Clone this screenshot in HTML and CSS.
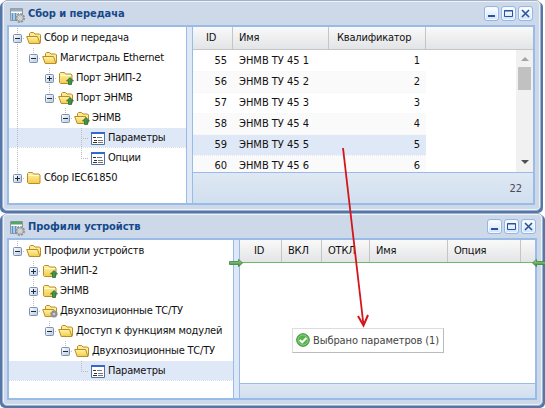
FILE: index.html
```html
<!DOCTYPE html>
<html lang="ru">
<head>
<meta charset="utf-8">
<title>Сбор и передача</title>
<link rel="stylesheet" href="styles.css">
</head>
<body>
<svg class="defs" width="0" height="0">
  <defs>
    <linearGradient id="gold" x1="0" y1="0" x2="0" y2="1"><stop offset="0" stop-color="#fff5a5"/><stop offset="1" stop-color="#f3cb4d"/></linearGradient>
    <linearGradient id="leaf" x1="0" y1="0" x2="0" y2="1"><stop offset="0" stop-color="#a4d991"/><stop offset="1" stop-color="#37853a"/></linearGradient>
    <linearGradient id="box" x1="0" y1="0" x2="1" y2="1"><stop offset="0" stop-color="#fff"/><stop offset="1" stop-color="#b9c7dc"/></linearGradient>
    <symbol id="closed" viewBox="0 0 16 16"><path d="M1.500 3.500l1-1h4l1 1.500h5.500l1 1v8l-1 .5h-10.500l-1-1z" fill="url(#gold)" stroke="#b88d2c"/><path d="M2.500 5.500h10.500" stroke="#fffbd4"/></symbol>
    <symbol id="open" viewBox="0 0 16 16"><path d="M3.500 12.500v-9l1-1h3l1.500 1.500h4.500l1 1v7.500l-1 1h-9z" fill="#ffe98c" stroke="#b88d2c"/><path d="M.7 6.500h10.800l2.500 7h-10.800z" fill="url(#gold)" stroke="#b88d2c"/></symbol>
    <symbol id="up" viewBox="0 0 8 8"><path d="M4 .5l3.500 3.500h-2v3.500h-3v-3.500h-2z" fill="#43924a" stroke="#2b7037" stroke-width=".8"/></symbol>
    <symbol id="gear" viewBox="0 0 8 8"><circle cx="4" cy="4" r="3.200" fill="#aaa" stroke="#7d8186" stroke-dasharray="1.500 1"/><circle cx="4" cy="4" r="2.600" fill="#9c9c9c" stroke="#858a90" stroke-width=".7"/><circle cx="4" cy="4" r="1" fill="#ddd"/></symbol>
    <symbol id="minus" viewBox="0 0 9 9"><rect x=".5" y=".5" width="8" height="8" rx="1" fill="url(#box)" stroke="#7890b2"/><path d="M2 4.500h5" stroke="#1c2b45"/></symbol>
    <symbol id="plus" viewBox="0 0 9 9"><rect x=".5" y=".5" width="8" height="8" rx="1" fill="url(#box)" stroke="#7890b2"/><path d="M2 4.500h5M4.500 2v5" stroke="#1c2b45"/></symbol>
    <symbol id="form" viewBox="0 0 14 13"><path d="M.5.5h13v12h-13z" fill="#fff" stroke="#5272a5"/><path d="M0 1h14" stroke="#3767ce" stroke-width="2"/><path d="M2 5.500h3M3 8.500h3M2 10.500h4" stroke="#333"/><path d="M6 5.500h5M7 8.500h5M7 10.500h5" stroke="#777"/></symbol>
    <symbol id="app" viewBox="0 0 16 16"><path d="M1.500 1.500h12v12h-12z" fill="#fff" stroke="#8798a8"/><path d="M2 3h11" stroke-width="3"/><path d="M3.500 6v7M6.500 6v7" stroke="#5b92cb" stroke-width="2"/><circle cx="11" cy="11" r="4" fill="#d6d9dc" stroke="#8b9095" stroke-dasharray="2 1.100" stroke-width="2"/><circle cx="11" cy="11" r="3.200" fill="#dadddf" stroke="#989da2"/><circle cx="11" cy="11" r="1.300" fill="#fff" stroke="#999" stroke-width=".6"/></symbol>
    <symbol id="wmin" viewBox="0 0 11 11"><path d="M2 8h7" stroke="#2d529c" stroke-width="2"/></symbol>
    <symbol id="wmax" viewBox="0 0 11 11"><path d="M1.500 2.500h8v6h-8zM1 3h9" fill="none" stroke="#2d529c"/></symbol>
    <symbol id="wclose" viewBox="0 0 11 11"><path d="M2 2l7 7M9 2l-7 7" stroke="#2d529c" stroke-width="1.600"/></symbol>
    <symbol id="drop" viewBox="0 0 14 8"><path d="M.5 2.500h9v-2.200l4 3.700-4 3.700v-2.200h-9z" fill="url(#leaf)" stroke="#3a863f" stroke-width=".8"/></symbol>
  </defs>
</svg>

<section class="window first">
  <header class="titlebar">
    <svg class="app"><use href="#app"/></svg><h1>Сбор и передача</h1>
    <button><svg><use href="#wmin"/></svg></button><button><svg><use href="#wmax"/></svg></button><button><svg><use href="#wclose"/></svg></button>
  </header>
  <div class="panes">
    <ul class="tree">
      <li><i class="line node"></i><svg class="tog"><use href="#minus"/></svg><svg class="ico"><use href="#open"/></svg><span>Сбор и передача</span></li>
      <li><i class="line"></i><i class="node"></i><svg class="tog"><use href="#minus"/></svg><svg class="ico"><use href="#open"/></svg><span>Магистраль Ethernet</span></li>
      <li><i class="line"></i><i></i><i class="line node"></i><svg class="tog"><use href="#plus"/></svg><svg class="ico"><use href="#closed"/><use href="#up" x="8" y="7" width="8" height="8"/></svg><span>Порт ЭНИП-2</span></li>
      <li><i class="line"></i><i></i><i class="node"></i><svg class="tog"><use href="#minus"/></svg><svg class="ico"><use href="#open"/><use href="#up" x="8" y="7" width="8" height="8"/></svg><span>Порт ЭНМВ</span></li>
      <li><i class="line"></i><i></i><i></i><i class="node"></i><svg class="tog"><use href="#minus"/></svg><svg class="ico"><use href="#open"/><use href="#up" x="8" y="7" width="8" height="8"/></svg><span>ЭНМВ</span></li>
      <li class="selected"><i class="line"></i><i></i><i></i><i></i><i class="tee"></i><svg class="form"><use href="#form"/></svg><span>Параметры</span></li>
      <li><i class="line"></i><i></i><i></i><i></i><i class="elbow"></i><svg class="form"><use href="#form"/></svg><span>Опции</span></li>
      <li><i class="node"></i><svg class="tog"><use href="#plus"/></svg><svg class="ico"><use href="#closed"/></svg><span>Сбор IEC61850</span></li>
    </ul>
    <div class="splitter"></div>
    <div class="grid">
      <div class="head"><span class="mid">ID</span><span>Имя</span><span>Квалификатор</span><span class="rest"></span></div>
      <div class="body">
        <div class="rows">
          <div class="row"><span>55</span><span>ЭНМВ ТУ 45 1</span><span>1</span></div>
          <div class="row"><span>56</span><span>ЭНМВ ТУ 45 2</span><span>2</span></div>
          <div class="row"><span>57</span><span>ЭНМВ ТУ 45 3</span><span>3</span></div>
          <div class="row"><span>58</span><span>ЭНМВ ТУ 45 4</span><span>4</span></div>
          <div class="row selected"><span>59</span><span>ЭНМВ ТУ 45 5</span><span>5</span></div>
          <div class="row"><span>60</span><span>ЭНМВ ТУ 45 6</span><span>6</span></div>
        </div>
        <div class="scroll"><b class="arrow-up"></b><b class="thumb"></b><b class="arrow-down"></b></div>
      </div>
      <footer>22</footer>
    </div>
  </div>
</section>

<section class="window second">
  <header class="titlebar">
    <svg class="app green"><use href="#app"/></svg><h1>Профили устройств</h1>
    <button><svg><use href="#wmin"/></svg></button><button><svg><use href="#wmax"/></svg></button><button><svg><use href="#wclose"/></svg></button>
  </header>
  <div class="panes">
    <ul class="tree">
      <li><i class="node"></i><svg class="tog"><use href="#minus"/></svg><svg class="ico"><use href="#open"/></svg><span>Профили устройств</span></li>
      <li><i></i><i class="line node"></i><svg class="tog"><use href="#plus"/></svg><svg class="ico"><use href="#closed"/><use href="#up" x="8" y="7" width="8" height="8"/></svg><span>ЭНИП-2</span></li>
      <li><i></i><i class="line node"></i><svg class="tog"><use href="#plus"/></svg><svg class="ico"><use href="#closed"/><use href="#up" x="8" y="7" width="8" height="8"/></svg><span>ЭНМВ</span></li>
      <li><i></i><i class="node"></i><svg class="tog"><use href="#minus"/></svg><svg class="ico"><use href="#open"/><use href="#gear" x="8" y="7" width="8" height="8"/></svg><span>Двухпозиционные ТС/ТУ</span></li>
      <li><i></i><i></i><i class="node"></i><svg class="tog"><use href="#minus"/></svg><svg class="ico"><use href="#open"/></svg><span>Доступ к функциям модулей</span></li>
      <li><i></i><i></i><i></i><i class="node"></i><svg class="tog"><use href="#minus"/></svg><svg class="ico"><use href="#open"/></svg><span>Двухпозиционные ТС/ТУ</span></li>
      <li class="selected"><i></i><i></i><i></i><i></i><i class="elbow"></i><svg class="form"><use href="#form"/></svg><span>Параметры</span></li>
    </ul>
    <div class="splitter"></div>
    <div class="grid">
      <div class="head"><span class="mid">ID</span><span>ВКЛ</span><span>ОТКЛ</span><span>Имя</span><span>Опция</span><span class="rest"></span></div>
      <div class="body"></div>
      <footer></footer>
    </div>
  </div>
  <svg class="drop left"><use href="#drop"/></svg>
  <svg class="drop right"><use href="#drop"/></svg>
</section>

<svg class="pointer" viewBox="0 0 30 182"><path d="M4 0L24.500 177" fill="none" stroke="#d4161b" stroke-width="1.800"/><path d="M19 168l5.500 9.500 4.500-10.500" fill="none" stroke="#d4161b" stroke-width="2"/></svg>
<div class="tip">
  <svg viewBox="0 0 14 14"><circle cx="7" cy="7" r="6.300" fill="#54b34b" stroke="#38913a"/><circle cx="7" cy="7" r="5" fill="none" stroke="#8ed27f"/><path d="M3.800 7l2.400 2.300 4.200-4.300" fill="none" stroke="#fff" stroke-width="2"/></svg>
  <span>Выбрано параметров (1)</span>
</div>
</body>
</html>
```

FILE: styles.css
```css
* { box-sizing: border-box; }
body {
  margin: 0; width: 545px; height: 408px; overflow: hidden; position: relative;
  background: #fff; color: #111;
  font: 11px/20px "DejaVu Sans Condensed", "DejaVu Sans", sans-serif;
  font-stretch: condensed; letter-spacing: 0; white-space: nowrap;
}
svg { display: block; flex: none; }
.defs { position: absolute; }

.window {
  position: relative; display: flex; flex-direction: column;
  margin-left: 2px; padding: 0 5px 5px 4px;
  border: 1px solid #a2b1cb; border-radius: 5px;
  background: #cdd9e8;
}
.first { width: 539px; height: 211px; box-shadow: inset 0 0 0 1px #eef3f9, -2px 2px 0 0 #5477a9, 2px 2px 0 0 #5477a9; }
.second { width: 541px; height: 193px; margin-top: 2px; box-shadow: inset 0 0 0 1px #eef3f9, -2px 2px 0 0 #5477a9, 2px 2px 0 0 #5477a9; }

.titlebar { display: flex; height: 24px; align-items: center; padding: 0 2px 0 2px; gap: 2px; }
.second .titlebar { padding-right: 1px; }
.app { width: 16px; height: 16px; margin-top: 3px; stroke: #9aa9b7; }
.green { stroke: #55a56a; }
h1 { flex: 1; margin: 2px 0 0 1px; font-size: 11px; line-height: 20px; color: #15498b; letter-spacing: -0.05px; }
button { width: 15px; height: 15px; padding: 1px; border: 1px solid #91b6e7; border-radius: 3px; background: linear-gradient(#fff, #cfe3fa); box-shadow: inset 0 0 0 1px #f4f9ff; }
button svg { width: 11px; height: 11px; }

.panes { flex: 1; min-height: 0; display: flex; border: 2px solid #99bbe8; }
.tree { width: 177px; margin: 0; padding: 1px 0 0; list-style: none; background: #fff; overflow: hidden; letter-spacing: -0.2px; }
.second .tree { width: 224px; }
.tree li { display: flex; align-items: center; height: 20px; padding-left: 1px; }
.tree .selected { background: linear-gradient(#dfe8f6, #dfe8f6) 0 0 / 100% 19px no-repeat, linear-gradient(90deg, #d3dfef 50%, transparent 0) 0 19px / 2px 1px repeat-x; }
.tog { position: relative; width: 9px; height: 9px; margin: 0 4px 0 3px; }
.ico { width: 16px; height: 16px; margin-right: 2px; }
.form { width: 14px; height: 13px; margin: 0 3px 0 1px; }
.tree i { position: relative; flex: none; width: 16px; height: 20px; }
/* the connector column sits behind its toggle */
.tree .node { margin-right: -16px; }
.line { background: linear-gradient(#bbb 50%, transparent 0) 7px 0 / 1px 2px repeat-y; }
.tee { background: linear-gradient(#bbb 50%, transparent 0) 7px 0 / 1px 2px repeat-y; }
.elbow::before, .node::before { content: ""; position: absolute; left: 7px; top: 0; width: 1px; height: 10px; background: linear-gradient(#bbb 50%, transparent 0) 0 0 / 1px 2px; }
.tee::after, .elbow::after, .node::after { content: ""; position: absolute; left: 7px; top: 10px; width: 8px; height: 1px; background: linear-gradient(90deg, #bbb 50%, transparent 0) 0 0 / 2px 1px; }

.splitter { width: 7px; border: solid #99bbe8; border-width: 0 1px; background: #dfe8f6; }
.grid { flex: 1; min-width: 0; display: flex; flex-direction: column; background: #fff; }
.head { height: 23px; flex: none; border-bottom: 1px solid #c5c5c5; background: linear-gradient(#f9f9f9, #e3e4e6); line-height: 22px; letter-spacing: -0.2px; }
.head span { border-right: 1px solid #c5c5c5; padding-left: 6px; }
.head .mid { padding: 0 3px 0 0; text-align: center; }
.head .rest { border: 0; }
.first .head { display: grid; grid-template-columns: 40px 96px 97px 1fr; }
.first .head span:nth-child(3) { padding-left: 8px; }
.second .head { display: grid; grid-template-columns: 42px 40px 48px 78px 73px 1fr; border-bottom-color: #72b56c; }
.body { flex: 1; min-height: 0; display: flex; overflow: hidden; }
.rows { flex: 1; padding-top: 1px; }
.row { display: grid; grid-template-columns: 40px 96px 97px; width: 233px; height: 21px; border-bottom: 1px dotted #f4f4f4; line-height: 20px; }
.row:nth-child(even) { background: #fafafa; }
.row span { padding: 0 6px; text-align: right; }
.row span:nth-child(2) { text-align: left; }
.row.selected { background: #dfe8f6; border-bottom-color: #fff; }
.scroll { width: 17px; background: #f1f1f1; display: flex; flex-direction: column; align-items: center; padding: 7px 0 8px; }
.arrow-up { border: solid transparent; border-width: 0 4px 4px; border-bottom-color: #a3a3a3; }
.thumb { width: 13px; height: 23px; margin-top: 6px; background: #c1c1c1; }
.arrow-down { margin-top: auto; border: solid transparent; border-width: 4px 4px 0; border-top-color: #505050; }
footer { flex: none; height: 31px; padding-right: 11px; border-top: 1px solid #99bbe8; background: linear-gradient(#dfe8f4, #d1dfee); text-align: right; line-height: 31px; color: #474b59; }
.second footer { height: 15px; }

.drop { position: absolute; width: 14px; height: 8px; top: 45px; }
.left { left: 226px; }
.right { right: -4px; transform: scaleX(-1); }
.pointer { position: absolute; left: 339px; top: 148px; width: 30px; height: 182px; }
.tip { position: absolute; left: 292px; top: 328px; width: 152px; height: 25px; display: flex; align-items: center; gap: 3px; padding: 0 0 2px 3px; border: 1px solid #ddd; border-right-color: #bbb; border-bottom-color: #bbb; background: #fff; color: #444; letter-spacing: -0.1px; }
.tip svg { width: 14px; height: 14px; }
.tip span { padding-top: 3px; }
```
